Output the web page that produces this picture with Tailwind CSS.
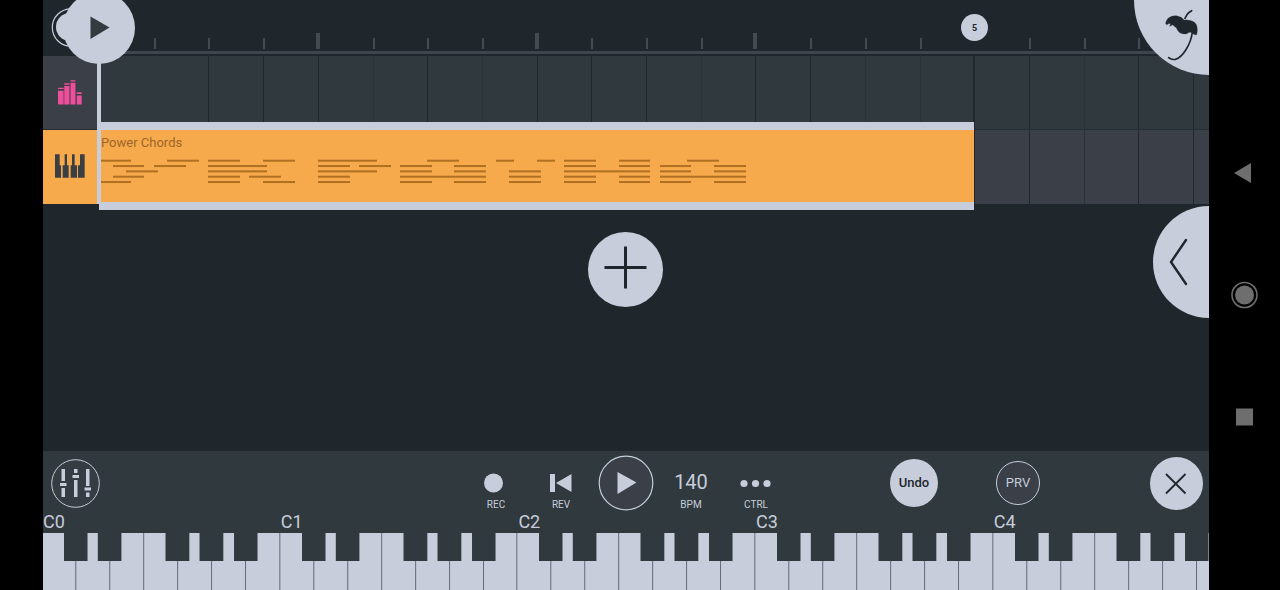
<!DOCTYPE html>
<html lang="en">
<head>
    <meta charset="UTF-8">
    <meta name="viewport" content="width=device-width, initial-scale=1.0">
    <title>Power Chords</title>
    <script src="https://cdn.jsdelivr.net/npm/@tailwindcss/browser@4"></script>
</head>
<body class="bg-black h-screen flex overflow-hidden pl-[43px] font-['Roboto',sans-serif] text-[#c7cddb]">

    <main class="relative flex-1 min-w-0 flex flex-col overflow-hidden bg-[#20272c]">

        <!-- Ruler -->
        <header class="relative h-14 shrink-0 pl-14">
            <svg id="ruler" class="block w-full h-14"></svg>
            <button aria-label="Loop" class="absolute left-2 top-2 size-10">
                <svg viewBox="0 0 40 40" class="size-10">
                    <circle cx="20" cy="19.5" r="18.7" fill="none" stroke="#c7cddb" stroke-width="1.2"/>
                    <circle cx="19" cy="19" r="14" fill="#c7cddb"/>
                </svg>
            </button>
            <button class="absolute left-[918px] top-[14px] size-[27px] rounded-full bg-[#c7cddb] text-[#20272c] text-[9px] leading-[26px] font-bold text-center">5</button>
        </header>

        <!-- Tracks -->
        <section class="relative flex flex-col">
            <div class="flex h-[74px] border-b border-[#262d32] bg-[#30393d]">
                <button aria-label="Drums" class="w-14 bg-[#3a3f48] flex items-center justify-center pr-[2px]">
                    <svg viewBox="53 240 73 75" class="w-6 h-[25px]" fill="#ee4f9b">
                        <path d="M53 272h17v42h-17zM72 258h16v56h-16zM91 248h15v66h-15zM110 287h15v27h-15z"/>
                        <path d="M53 263h17v4h-17zM72 249h16v5h-16zM91 240h15v4h-15zM110 277h15v5h-15z"/>
                    </svg>
                </button>
                <svg class="lane flex-1 h-full"></svg>
            </div>
            <div class="flex h-[74px] bg-[#3b3f48]">
                <button aria-label="Power Chords" class="w-14 bg-[#f6aa4c] flex items-center justify-center pr-[2px] pb-[2px]">
                    <svg viewBox="45 102 90 70" class="w-[30px] h-6" fill="#3b3f44">
                        <path d="M45 102h14v33h4v37h-18zM74 102h7v33h5v37h-18v-37h6zM96 102h8v33h7v37h-19v-37h4zM120 102h14v70h-20v-37h6z"/>
                    </svg>
                </button>
                <svg class="lane flex-1 h-full"></svg>
            </div>

            <!-- Selected clip -->
            <div class="absolute left-14 top-[66px] w-[875px] h-[88px] border-y-8 border-[#c7cddb] bg-[#f6aa4c]">
                <p class="pl-[2px] pt-[5px] text-[13px] leading-4 text-[#a0662a]">Power Chords</p>
                <svg id="notes" class="absolute left-0 top-0 w-full h-full" fill="#b06f22"></svg>
            </div>
        </section>

        <!-- Playhead -->
        <div class="absolute left-[54px] top-10 w-1 h-[164px] bg-[#c7cddb]"></div>
        <button aria-label="Playhead" class="absolute left-5 -top-2 size-[72px] rounded-full bg-[#c7cddb]">
            <svg viewBox="0 0 72 72" class="size-[72px]" fill="#333b41"><path d="M27.5 24.5v22.5l19-11.5z"/></svg>
        </button>

        <div class="flex-1 pt-7 pr-[2px]">
            <button aria-label="Add track" class="block mx-auto size-[75px] rounded-full bg-[#c7cddb]">
                <svg viewBox="0 0 75 75" class="size-[75px]" stroke="#20272c" stroke-width="3"><path d="M16.5 35.5h42M37.5 14.5v42"/></svg>
            </button>
        </div>

        <!-- Corner buttons -->
        <button aria-label="Home" class="absolute right-0 top-0 size-[75px] rounded-bl-full bg-[#c7cddb]">
            <svg viewBox="0 0 225 225" class="size-[75px]" fill="none" stroke="#20272c" stroke-linecap="round">
                <path d="M173 32Q160 38 153 55" stroke-width="5"/>
                <path d="M175 96C171 132 146 173 124 178Q112 180 104 173" stroke-width="5"/>
                <path d="M95 71C97 52 116 44 133 49Q144 51 150 60C162 60 177 61 184 70C191 78 191 92 188 104Q181 105 178 102Q175 98 170 97Q164 97 158 101Q150 103 141 100C133 97 130 88 126 82Q121 80 117 74L107 79L110 71Q103 69 99 74Z" fill="#20272c" stroke-width="1"/>
            </svg>
        </button>
        <button aria-label="Open browser" class="absolute right-0 top-[206px] w-14 h-28 rounded-l-full bg-[#c7cddb]">
            <svg viewBox="0 0 56 112" class="w-14 h-28" fill="none" stroke="#20272c" stroke-width="2.4" stroke-linecap="round"><path d="M33 34L18 56l15 22"/></svg>
        </button>

        <!-- Transport -->
        <footer class="bg-[#30393d] shrink-0">
            <div class="grid grid-cols-[1fr_auto_1fr] h-16 items-center text-[10px]">
                <button aria-label="Mixer" class="ml-2 size-[49px]">
                    <svg viewBox="0 0 49 49" class="size-[49px]" fill="#c7cddb">
                        <circle cx="24.5" cy="24.5" r="23.8" fill="#3a3f48" fill-opacity="0.5" stroke="#c7cddb"/>
                        <path d="M10.5 10h3.5v12h-3.5zM10.500 29h3.500v9h-3.500zM9 24h6.500v3h-6.500zM23 10h3.500v4h-3.500zM23 21h3.500v17h-3.500zM21.500 16h6.500v3h-6.500zM35 10h3.500v17h-3.500zM35 33.500h3.500v4.500h-3.500zM33.500 28.500h6.500v3h-6.500z"/>
                    </svg>
                </button>
                <div class="grid grid-cols-[repeat(5,65px)] h-16">
                    <button class="flex flex-col items-center pt-4 leading-3">
                        <svg viewBox="0 0 34 32" class="w-[34px] h-8" fill="#c7cddb"><circle cx="14.5" cy="16" r="9.5"/></svg>
                        REC
                    </button>
                    <button class="flex flex-col items-center pt-4 leading-3">
                        <svg viewBox="0 0 34 32" class="w-[34px] h-8" fill="#c7cddb"><path d="M6 7h5v18h-5zM12 16l15.5-9v18z"/></svg>
                        REV
                    </button>
                    <button aria-label="Play" class="flex items-center justify-center">
                        <svg viewBox="0 0 56 56" class="size-14" fill="#c7cddb">
                            <circle cx="28" cy="28" r="26.8" fill="#3a3f48" stroke="#c7cddb" stroke-width="1.2"/>
                            <path d="M19.5 17v22l19-11.5z"/>
                        </svg>
                    </button>
                    <button class="flex flex-col items-center pt-4 leading-3">
                        <span class="text-[20px] leading-[30px] h-8">140</span>
                        BPM
                    </button>
                    <button class="flex flex-col items-center pt-4 leading-3">
                        <svg viewBox="0 0 34 32" class="w-[34px] h-8" fill="#c7cddb"><circle cx="5" cy="16.5" r="3.6"/><circle cx="16.5" cy="16.5" r="3.6"/><circle cx="28" cy="16.5" r="3.6"/></svg>
                        CTRL
                    </button>
                </div>
                <div class="flex items-center justify-end pr-[6px]">
                    <button class="size-12 rounded-full bg-[#c7cddb] text-[#20272c] text-[13px] font-medium">Undo</button>
                    <button class="ml-[58px] size-11 rounded-full border border-[#c7cddb] bg-[#3a3f48] text-[13px]">PRV</button>
                    <button aria-label="Close" class="ml-[110px] size-[53px] rounded-full bg-[#c7cddb]">
                        <svg viewBox="0 0 53 53" class="size-[53px]" stroke="#20272c" stroke-width="1.8"><path d="M16 17l19.5 19.5M35.5 17l-19.5 19.5"/></svg>
                    </button>
                </div>
            </div>
            <div id="keyboard" class="flex -ml-[2px] -mt-1"></div>
        </footer>
    </main>

    <!-- System navigation -->
    <nav class="w-[71px] shrink-0 flex flex-col items-center justify-center gap-[90px]">
        <button aria-label="Back" class="size-8"><svg viewBox="0 0 32 32" class="size-8" fill="#6e6e6e"><path d="M5 16l17-10v20z"/></svg></button>
        <button aria-label="Home screen" class="size-8">
            <svg viewBox="0 0 32 32" class="size-8" fill="#6e6e6e"><circle cx="15.5" cy="16" r="9.5"/><circle cx="15.5" cy="16" r="12.5" fill="none" stroke="#6e6e6e" stroke-width="1.6"/></svg>
        </button>
        <button aria-label="Recent apps" class="size-8"><svg viewBox="0 0 32 32" class="size-8" fill="#6e6e6e"><path d="M7 7.5h17v17h-17z"/></svg></button>
    </nav>

    <script>
        const BEAT = 54.7;
        const rect = (x, y, w, h, fill) => `<rect x="${x}" y="${y}" width="${w}" height="${h}"${fill ? ` fill="${fill}"` : ''}/>`;

        // ruler: short tick per beat, tall tick per bar
        let ticks = rect(0, 51, '100%', 3, '#3d464c');
        for (let i = 1; i < 60; i++) {
            if (i === 16) continue;
            const x = Math.round(i * BEAT);
            ticks += i % 4 ? rect(x, 38, 2, 11, '#434b51') : rect(x - 2, 33, 4, 16, '#434b51');
        }
        document.getElementById('ruler').innerHTML = ticks;

        // grid lines behind the clips
        const faint = [5, 7, 11, 14, 15, 18];
        let lines = '';
        for (let i = 2; i < 60; i++) {
            lines += rect(i === 16 ? 874 : Math.round(i * BEAT), 0, i === 16 ? 2 : 1, '100%', faint.includes(i) ? '#2b3338' : '#20282d');
        }
        document.querySelectorAll('.lane').forEach(lane => lane.innerHTML = lines);

        // notes per pitch: [start, end]
        const notes = [
            [[2, 32], [68, 100], [109, 141], [164, 196], [219, 278], [328, 360], [397, 415], [438, 456], [465, 497], [520, 551], [588, 620]],
            [[14, 45], [55, 87], [109, 168], [219, 251], [260, 292], [301, 333], [355, 387], [465, 497], [520, 551], [561, 592], [615, 647]],
            [[27, 59], [109, 168], [219, 278], [301, 333], [355, 387], [410, 442], [465, 551], [561, 592], [615, 647]],
            [[14, 45], [109, 141], [150, 182], [219, 251], [301, 387], [410, 442], [465, 497], [520, 551], [561, 647]],
            [[2, 32], [109, 141], [164, 196], [219, 251], [301, 333], [355, 387], [410, 442], [465, 497], [520, 551], [561, 592], [615, 647]]
        ];
        document.getElementById('notes').innerHTML = notes.map((row, r) =>
            row.map(([a, b]) => rect(a, 29.7 + r * 5.33, b - a, 2)).join('')).join('');

        // one octave: 7 white keys with the black ones cut out of the top
        const black = [[23, 23.5], [56.8, 23.6], [124.5, 23.8], [158.5, 23.8], [193, 23.5]];
        let keys = rect(0, 0, 238, 57, '#c7cddb');
        for (let i = 0; i < 7; i++) keys += rect(i * 33.95 + 0.4, 0, 0.9, 57, '#59616d');
        black.forEach(([x, w]) => keys += rect(x, 0, w, 28, '#30393d'));
        let octaves = '';
        for (let o = 0; o < 5; o++) {
            octaves += `<div class="shrink-0" style="width:20.35%">
                <p class="pl-[2px] text-[18px] leading-[22px]">C${o}</p>
                <svg viewBox="0 0 237.66 57" preserveAspectRatio="none" class="block w-full h-[57px]">${keys}</svg>
            </div>`;
        }
        document.getElementById('keyboard').innerHTML = octaves;
    </script>
</body>
</html>
